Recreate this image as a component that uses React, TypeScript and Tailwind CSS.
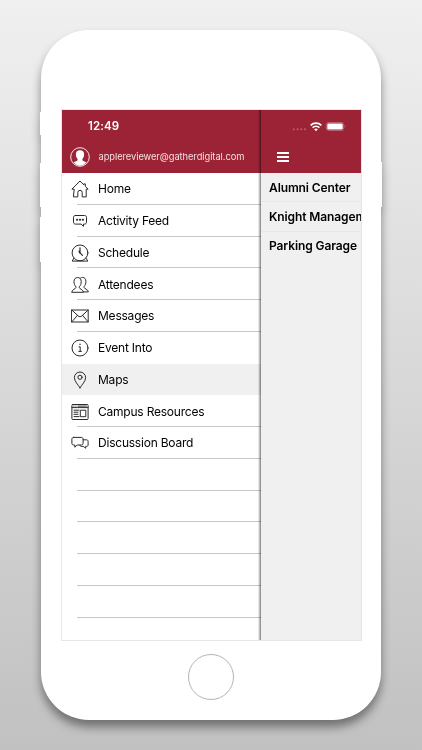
import type { ReactNode } from "react";

function Icon({ children }: { children: ReactNode }) {
	return (
		<svg
			viewBox="0 0 18 18"
			className="w-[18px] h-[18px] shrink-0"
			fill="none"
			stroke="#2a2a2a"
			strokeWidth="1"
			strokeLinejoin="round"
			strokeLinecap="round"
		>
			{children}
		</svg>
	);
}

const menu = [
	{
		title: "Home",
		icon: (
			<>
				<path d="M2.8 9.2H.9L9 1l3.8 3.8V3.9h1.500v2.400l2.800 2.900h-1.900v7.700h-4v-4.400a2.200 2.200 0 0 0-4.400 0v4.400h-4z" />
			</>
		),
	},
	{
		title: "Activity Feed",
		icon: (
			<>
				<path d="M4.3 3.5h9.400c1 0 1.800.8 1.800 1.800v5c0 1-.8 1.800-1.800 1.800h-1.200v2.200l-2.400-2.200H4.300c-1 0-1.800-.8-1.800-1.800v-5c0-1 .8-1.800 1.800-1.800z" />
				<path d="M6 7.8h.2M8.9 7.8h.2M11.8 7.8h.2" strokeWidth="2" />
			</>
		),
	},
	{
		title: "Schedule",
		icon: (
			<>
				<circle cx="9" cy="8.9" r="7.9" />
				<path d="M9 3.8v5.4M8.9 9.2 8 7.2M9.2 8.9l2.2 2.4" strokeWidth="1.2" />
				<path d="M2.9 14.2 1.2 17.1h15.6l-1.7-2.9" />
			</>
		),
	},
	{
		title: "Attendees",
		icon: (
			<>
				<path d="M5 10.8C3.5 9.5 3 7.6 3 5.6 3 3.1 4.4 1.5 6.6 1.5s3.6 1.6 3.6 4.1c0 2-.5 3.9-1.9 5.1v1.1c0 1 3.8 1.5 4.2 4.5H.7c.3-3 4.3-3.4 4.3-4.5z" />
				<path d="M9.4 2.2C10 1.6 10.7 1.4 11.5 1.4c2.1 0 3.4 1.6 3.4 4 0 2-.5 3.8-1.8 5v1.2c0 1.2 3.8 1.4 4.3 4.3h-4.8" />
			</>
		),
	},
	{
		title: "Messages",
		icon: (
			<>
				<path d="M.8 3h16.4v12H.8z" />
				<path d="m.8 3 6.3 5.9c1.2 1.1 2.6 1.1 3.8 0L17.2 3M.8 15l5.6-6.6M17.2 15l-5.6-6.6" />
			</>
		),
	},
	{
		title: "Event Into",
		icon: (
			<>
				<circle cx="9" cy="9" r="8" />
				<path d="M8 7.8h1.2v4.5M7.8 12.4h2.6" />
				<path d="M9 5.2v.2" strokeWidth="1.4" />
			</>
		),
	},
	{
		title: "Maps",
		active: true,
		icon: (
			<>
				<path d="M9 16.8C7.3 13.8 3.4 10.5 3.4 6.6a5.6 5.6 0 0 1 11.2 0c0 3.9-3.9 7.2-5.6 10.2z" />
				<circle cx="9" cy="6.3" r="2.1" />
			</>
		),
	},
	{
		title: "Campus Resources",
		icon: (
			<>
				<rect x=".9" y="1.5" width="16.2" height="15" rx="1" />
				<path d="M1 4.6h16" />
				<path d="M2.8 3.1h.2M4.8 3.1h.2M7 3.1h8.3" />
				<path d="M3 7.2h5M3 9.2h4M3 11.3h4M3 13.6h5" />
				<path d="M9.7 7.2h5.1v6.5H9.7z" />
			</>
		),
	},
	{
		title: "Discussion Board",
		icon: (
			<>
				<path d="M2.6 3.4h7.8c1 0 1.7.7 1.7 1.7v4.2c0 1-.7 1.7-1.7 1.7H6.2l-2.4 2.2V11H2.6C1.6 11 .9 10.3.9 9.3V5.1c0-1 .7-1.7 1.7-1.7z" />
				<path d="M12.3 5.8h3.1c1 0 1.7.6 1.7 1.5v3.6c0 .9-.6 1.5-1.5 1.5h-.9v1.8l-2.4-1.8h-2c-.7 0-1.2-.4-1.4-1" />
			</>
		),
	},
];

const places = ["Alumni Center", "Knight Management", "Parking Garage"];

function Avatar() {
	return (
		<svg viewBox="0 0 20 20" className="w-5 h-5 shrink-0">
			<circle cx="10" cy="10" r="9.3" fill="none" stroke="#fff" strokeWidth=".9" />
			<path
				d="M10 3.3c2.7 0 4.1 1.6 4.1 4 0 1.9-.6 3.6-1.7 4.6v1.2c.2 1 2.5 1.3 4 2.5A8.7 8.7 0 0 1 10 18.7a8.7 8.7 0 0 1-6.400-3.100c1.500-1.200 3.800-1.500 4-2.500v-1.200c-1.100-1-1.700-2.700-1.700-4.600 0-2.400 1.400-4 4.100-4z"
				fill="#fff"
			/>
		</svg>
	);
}

function StatusIcons() {
	return (
		<svg viewBox="0 0 56 12" className="w-14 h-3">
			<g fill="#b9606f">
				<circle cx="2.8" cy="8.2" r="1" />
				<circle cx="6.5" cy="8.2" r="1" />
				<circle cx="10.2" cy="8.2" r="1" />
				<circle cx="13.9" cy="8.2" r="1" />
			</g>
			<g fill="none" stroke="#fff" strokeWidth="1.7">
				<path d="M19.6 4.3a8 8 0 0 1 10.8 0" />
				<path d="M21.6 6.7a5 5 0 0 1 6.8 0" />
			</g>
			<path d="M23.2 8.3a2.7 2.7 0 0 1 3.6 0L25 10.2z" fill="#fff" />
			<rect x="35.3" y="1.5" width="17.4" height="8" rx="2.2" fill="none" stroke="#c77d89" strokeWidth=".7" />
			<rect x="36.3" y="2.5" width="15.4" height="6" rx="1.3" fill="#fff" />
			<path d="M53.7 4.2c.9.3.9 2.3 0 2.6z" fill="#c77d89" />
		</svg>
	);
}

function Sidebar() {
	return (
		<div className="w-[199px] shrink-0 bg-white flex flex-col">
			<div className="h-[63px] shrink-0 bg-[#9b2335] text-white">
				<div className="h-[33px] pl-[26px] flex items-center text-[11.5px] font-semibold tracking-[0.1px]">
					12:49
				</div>
				<div className="h-[30px] pl-2 pb-0.5 flex items-center gap-2">
					<Avatar />
					<span className="text-[9.3px] tracking-[-0.05px] pl-[0.5px] text-[#f5dfe2]">
						applereviewer@gatherdigital.com
					</span>
				</div>
			</div>
			{menu.map(({ title, icon, active }, i) => {
				// no divider around the selected row
				const plain = active || menu[i + 1]?.active;
				return (
					<div
						key={title}
						className={
							active
								? "h-[31.75px] shrink-0 flex flex-col bg-[#f0f0f0]"
								: "h-[31.75px] shrink-0 flex flex-col"
						}
					>
						<div className={plain ? "flex-1 pl-[9px] pt-px flex items-center gap-[9px]" : "flex-1 pl-[9px] pt-[2px] flex items-center gap-[9px]"}>
							<Icon>{icon}</Icon>
							<span className="text-[12px] tracking-[-0.22px] text-black">{title}</span>
						</div>
						{!plain && <div className="h-px ml-[15px] bg-[#c8c8c8]" />}
					</div>
				);
			})}
			{[1, 2, 3, 4, 5].map((n) => (
				<div key={n} className="h-[31.75px] shrink-0 ml-[15px] border-b border-[#c8c8c8]" />
			))}
		</div>
	);
}

function Places() {
	return (
		<div className="flex-1 min-w-0 bg-[#f0f0f0] overflow-hidden">
			<div className="h-[63px] bg-[#9b2335]">
				<div className="h-[33px] pl-[30px] flex items-center">
					<StatusIcons />
				</div>
				<div className="h-[30px] pl-4 pb-0.5 flex items-center">
					<div className="w-3 flex flex-col gap-[2.5px]">
						<span className="h-[1.5px] bg-white" />
						<span className="h-[1.5px] bg-white" />
						<span className="h-[1.5px] bg-white" />
					</div>
				</div>
			</div>
			{places.map((place, i) => (
				<div
					key={place}
					className={
						i < 2
							? "h-[29.33px] pl-2 pt-[2px] flex items-center border-b border-[#e8e8e8] text-[12px] tracking-[-0.1px] font-semibold whitespace-nowrap text-black"
							: "h-[29.33px] pl-2 flex items-center text-[12px] tracking-[-0.1px] font-semibold whitespace-nowrap text-black"
					}
				>
					{place}
				</div>
			))}
		</div>
	);
}

export default function App() {
	return (
		<div className="w-[422px] h-[750px] overflow-hidden bg-linear-to-b from-[#f0f0f0] to-[#c1c1c1] pt-[30px] font-['Inter',sans-serif]">
			<div className="relative w-[340px] h-[690px] ml-[41px] rounded-[48px] bg-white pt-[79px] pl-5 drop-shadow-[0_7px_5px_rgba(0,0,0,0.42)]">
				{/* hardware buttons */}
				<span className="absolute -left-px top-[82px] w-2 h-[23px] bg-white" />
				<span className="absolute -left-px top-[133px] w-2 h-[44px] bg-white" />
				<span className="absolute -left-px top-[187px] w-2 h-[45px] bg-white" />
				<span className="absolute -right-[1px] top-[132px] w-2 h-[45px] bg-white" />
				<div className="relative w-[301px] h-[532px] border border-[#e6e6e6] flex overflow-hidden">
					<Sidebar />
					<Places />
					<span className="absolute left-[196px] top-0 w-[3px] h-full bg-linear-to-r from-transparent to-black/50" />
				</div>
				<div className="mt-[13px] ml-[127px] w-[46px] h-[46px] rounded-full border border-[#b4b4b4]" />
			</div>
		</div>
	);
}
